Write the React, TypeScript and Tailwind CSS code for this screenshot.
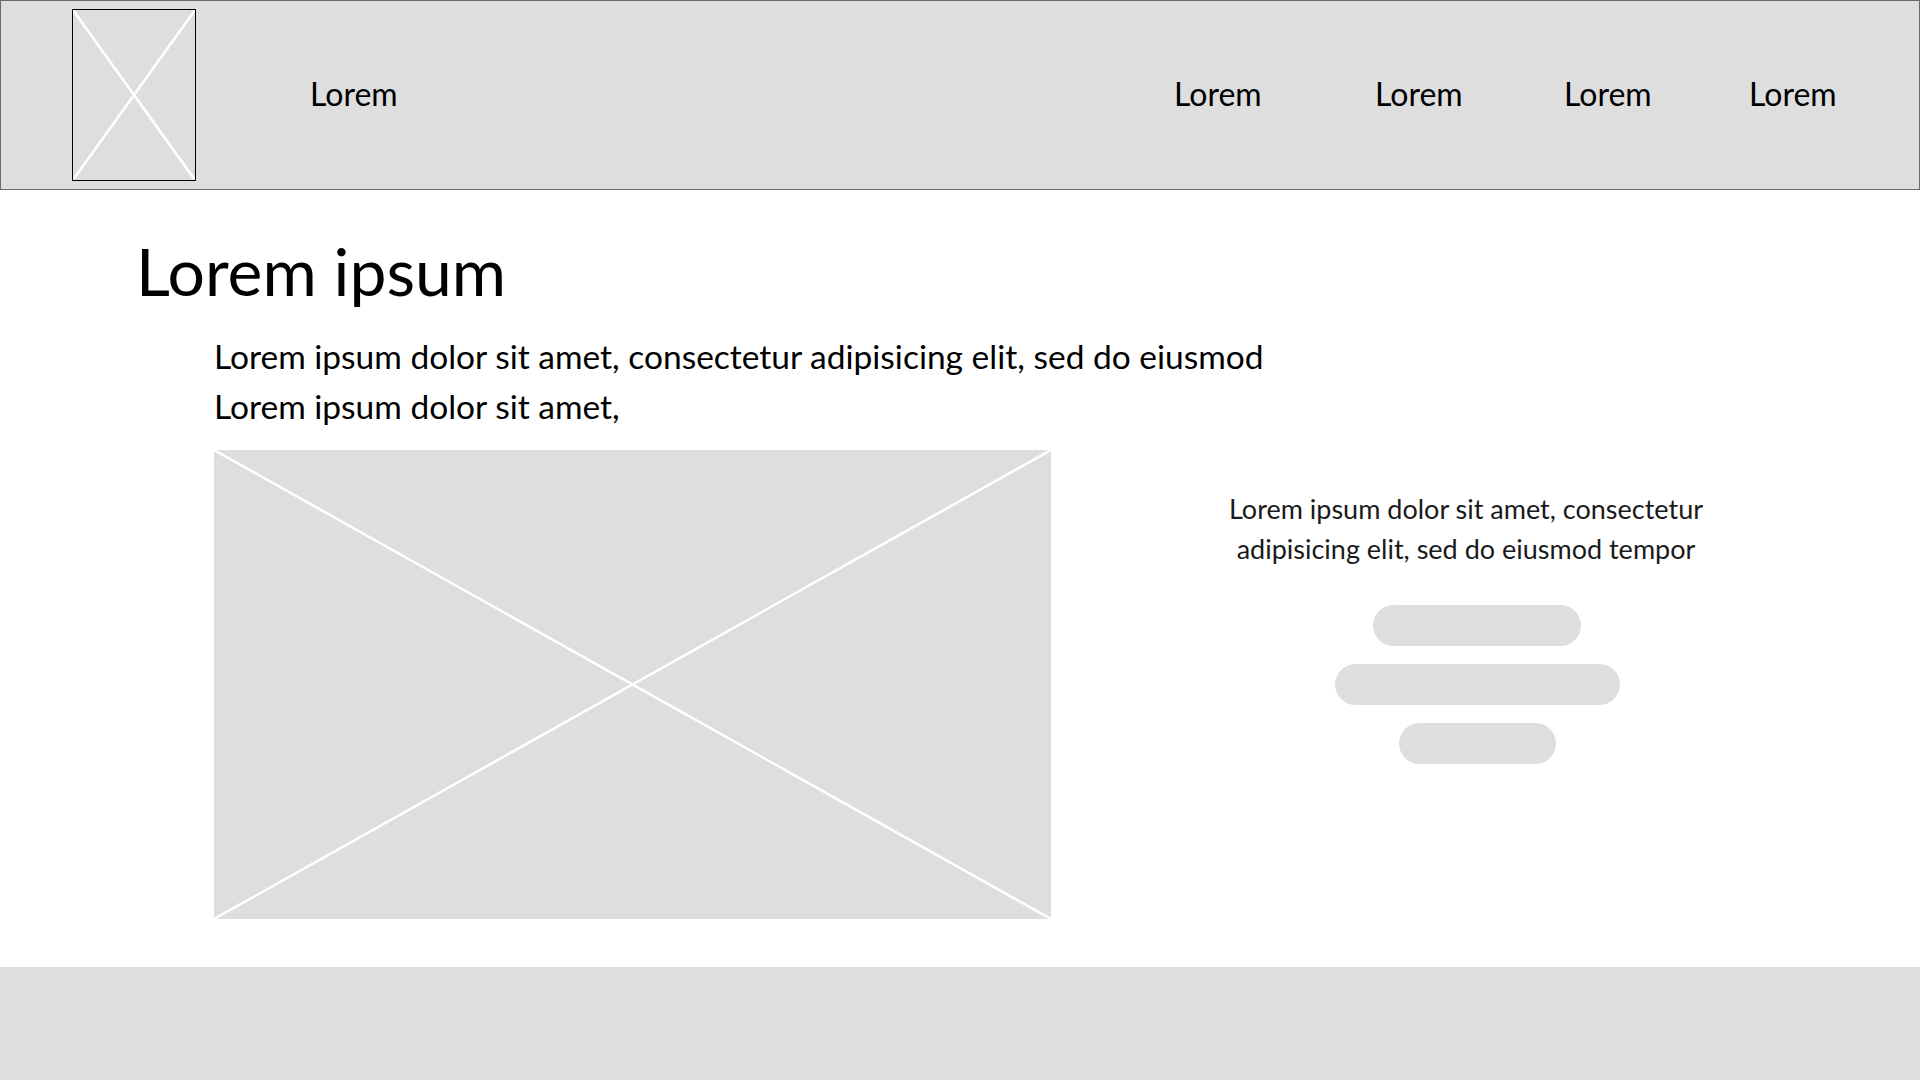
import React from "react";

function XBox({ className }: { className: string }) {
  return (
    <div className={className}>
      <svg width="100%" height="100%" preserveAspectRatio="none" viewBox="0 0 100 100" className="block">
        <line x1="0" y1="0" x2="100" y2="100" stroke="#ffffff" strokeWidth="2.5" vectorEffect="non-scaling-stroke" />
        <line x1="100" y1="0" x2="0" y2="100" stroke="#ffffff" strokeWidth="2.5" vectorEffect="non-scaling-stroke" />
      </svg>
    </div>
  );
}

export default function App() {
  return (
    <div className="w-[1920px] h-[1080px] bg-white flex flex-col overflow-hidden text-black" style={{ fontFamily: "Lato, 'Open Sans', sans-serif" }}>
      <header className="h-[190px] shrink-0 border border-[#6b6b6b] bg-[#dedede] flex items-center">
        <XBox className="ml-[71px] w-[124px] h-[172px] border border-black bg-[#dedede]" />
        <div className="flex items-center pb-[3px]">
          <div className="ml-[114px] w-[864px] text-[32px] leading-none">Lorem</div>
          <div className="w-[201px] text-[32px] leading-none">Lorem</div>
          <div className="w-[189px] text-[32px] leading-none">Lorem</div>
          <div className="w-[185px] text-[32px] leading-none">Lorem</div>
          <div className="text-[32px] leading-none">Lorem</div>
        </div>
      </header>

      <main className="flex-1 pt-[46px]">
        <h1 className="ml-[136px] text-[66px] leading-[70px] font-normal">Lorem ipsum</h1>
        <p className="ml-[214px] mt-[25px] text-[33.5px] leading-[50px]">
          Lorem ipsum dolor sit amet, consectetur adipisicing elit, sed do eiusmod
          <br />
          Lorem ipsum dolor sit amet,
        </p>
        <div className="flex mt-[19px] ml-[214px]">
          <XBox className="w-[837px] h-[469px] bg-[#dedede]" />
          <div className="ml-[161px] w-[508px] pt-[39px] flex flex-col">
            <p className="text-center text-[27px] leading-[40px] text-[#1a1a1a]">
              Lorem ipsum dolor sit amet, consectetur
              <br />
              adipisicing elit, sed do eiusmod tempor
            </p>
            <div className="mt-[36px] w-[530px] flex flex-col items-center gap-[18px]">
              <div className="w-[208px] h-[41px] rounded-full bg-[#dedede]" />
              <div className="w-[285px] h-[41px] rounded-full bg-[#dedede]" />
              <div className="w-[157px] h-[41px] rounded-full bg-[#dedede]" />
            </div>
          </div>
        </div>
      </main>

      <footer className="h-[113px] shrink-0 bg-[#dedede]" />
    </div>
  );
}
